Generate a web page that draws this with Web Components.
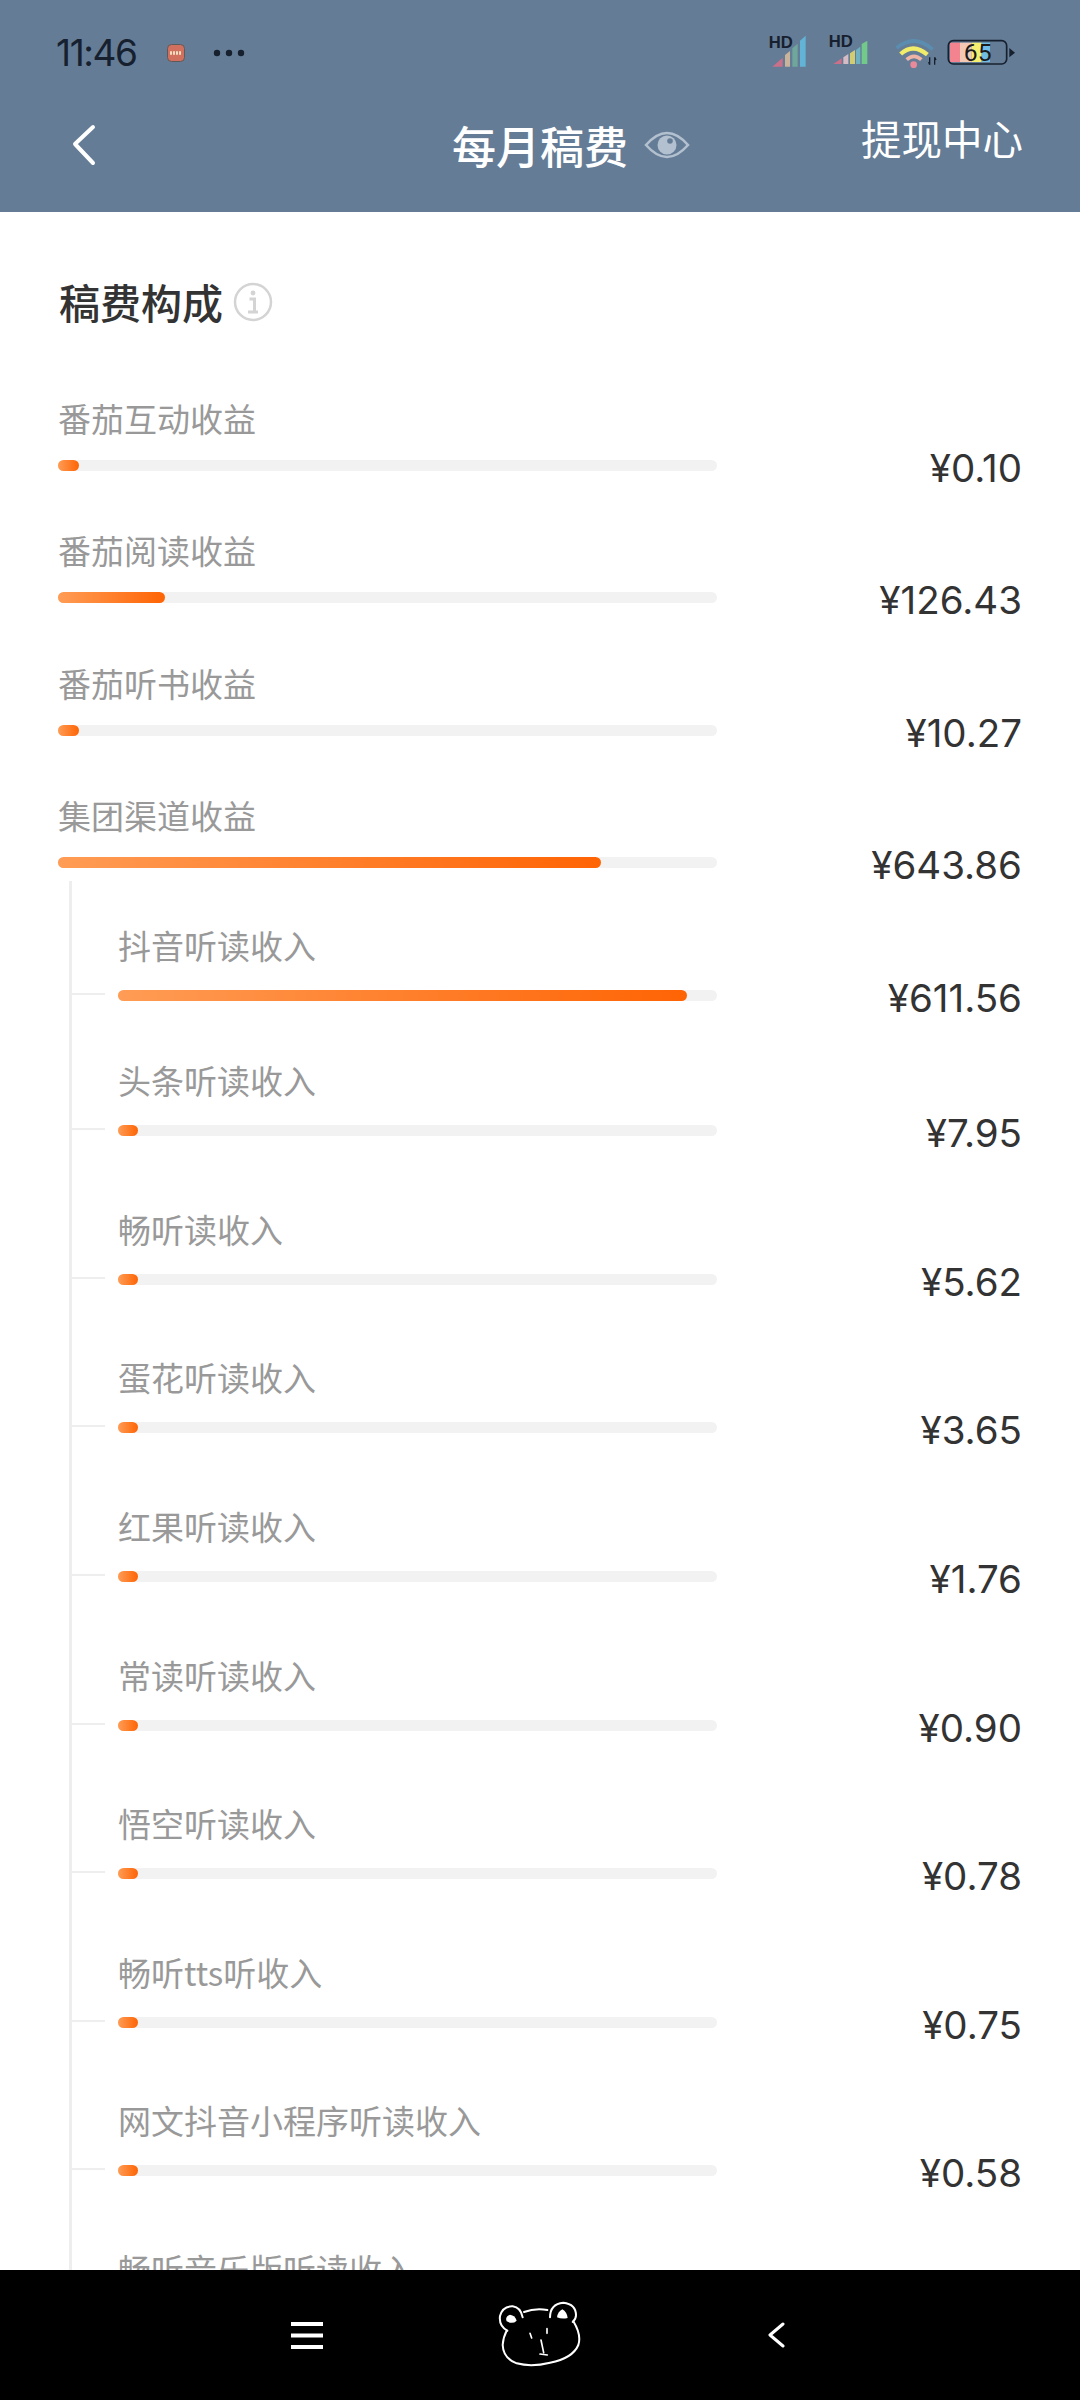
<!DOCTYPE html>
<html lang="zh">
<head>
<meta charset="utf-8">
<title>每月稿费</title>
<style>
  html, body { margin: 0; padding: 0; background: #fff; }
  body { width: 1080px; height: 2400px; overflow: hidden; font-family: Inter, "Noto Sans CJK SC", sans-serif; }
  app-screen { height: 2400px; }
</style>
</head>
<body>
<app-screen>
  <status-bar></status-bar>
  <title-bar heading="每月稿费" action="提现中心"></title-bar>
  <fee-panel slot="main" heading="稿费构成">
    <fee-row label="番茄互动收益" amount="¥0.10" fill="21"></fee-row>
    <fee-row label="番茄阅读收益" amount="¥126.43" fill="107"></fee-row>
    <fee-row label="番茄听书收益" amount="¥10.27" fill="21"></fee-row>
    <fee-row label="集团渠道收益" amount="¥643.86" fill="543"></fee-row>
    <fee-tree>
      <fee-row sub first label="抖音听读收入" amount="¥611.56" fill="569"></fee-row>
      <fee-row sub second label="头条听读收入" amount="¥7.95" fill="20"></fee-row>
      <fee-row sub label="畅听读收入" amount="¥5.62" fill="20"></fee-row>
      <fee-row sub label="蛋花听读收入" amount="¥3.65" fill="20"></fee-row>
      <fee-row sub label="红果听读收入" amount="¥1.76" fill="20"></fee-row>
      <fee-row sub label="常读听读收入" amount="¥0.90" fill="20"></fee-row>
      <fee-row sub label="悟空听读收入" amount="¥0.78" fill="20"></fee-row>
      <fee-row sub label="畅听tts听收入" amount="¥0.75" fill="20"></fee-row>
      <fee-row sub label="网文抖音小程序听读收入" amount="¥0.58" fill="20"></fee-row>
      <fee-row sub label="畅听音乐版听读收入" amount="¥0.44" fill="20"></fee-row>
    </fee-tree>
  </fee-panel>
  <nav-bar slot="nav"></nav-bar>
</app-screen>

<script>
/**
 * Page frame: coloured header on top, clipped content, navigation at the bottom.
 */
class AppScreen extends HTMLElement {
  connectedCallback () {
    this.attachShadow({ mode: 'open' }).innerHTML = `
      <style>
        :host { display: flex; flex-direction: column; width: 1080px; background: #fff; }
        header { height: 212px; background: #647c96; flex: none; }
        main { flex: 1; min-height: 0; overflow: hidden; }
        footer { flex: none; }
      </style>
      <header><slot></slot></header>
      <main><slot name="main"></slot></main>
      <footer><slot name="nav"></slot></footer>
    `;
  }
}

class StatusBar extends HTMLElement {
  connectedCallback () {
    this.attachShadow({ mode: 'open' }).innerHTML = `
      <style>
        :host { display: flex; justify-content: space-between; height: 40px; padding: 30px 64px 0 56px; }
        .left { display: flex; align-items: center; padding-top: 6px; height: 40px; box-sizing: border-box; }
        .time { font: 400 37px/40px Inter, sans-serif; color: #16202e; letter-spacing: -1.4px; width: 111px; }
        .app { margin-right: 28px; }
        .right { display: flex; align-items: flex-start; }
        svg { display: block; flex: none; }
      </style>
      <div class="left">
        <span class="time">11:46</span>
        <svg class="app" width="18" height="18" viewBox="0 0 18 18">
          <rect x=".5" y=".5" width="17" height="17" rx="4" fill="#d2705f" stroke="#5d5a5c"/>
          <path d="M3 9h12" stroke="#f3dfc0" stroke-width="3.5" stroke-dasharray="2 1"/>
        </svg>
        <svg width="32" height="8" viewBox="0 0 32 8" fill="#16202e">
          <circle cx="4" cy="4" r="3.2"/><circle cx="16" cy="4" r="3.2"/><circle cx="28" cy="4" r="3.2"/>
        </svg>
      </div>
      <div class="right">
        <svg width="42" height="40" viewBox="78 30 126 120" style="margin-right:18px">
          <path d="M97 140l31-27v27z" fill="#c9708a"/>
          <path d="M135 105l15-12v47h-15z" fill="#c9b39b"/>
          <path d="M157 85l16-14v69h-16z" fill="#6fa79c"/>
          <path d="M180 62l17-15v93h-17z" fill="#62b3d6"/>
          <text x="86" y="85" font-family="Liberation Sans" font-weight="700" font-size="50" fill="#16202e">HD</text>
        </svg>
        <svg width="43" height="40" viewBox="258 30 129 120" style="margin-right:21px">
          <path d="M280 132l25-17v17z" fill="#c9708a"/>
          <path d="M310 112l15-10v30h-15z" fill="#d5bcc4"/>
          <path d="M330 100l15-10v42h-15z" fill="#d2cd72"/>
          <path d="M348 90l13-10v52h-13z" fill="#6eb1c2"/>
          <path d="M365 72l17-10v70h-17z" fill="#72c98a"/>
          <text x="266" y="82" font-family="Liberation Sans" font-weight="700" font-size="50" fill="#16202e">HD</text>
        </svg>
        <svg width="48" height="40" viewBox="450 30 144 120" style="margin-right:8px" fill="none">
          <path d="M470 84q52-44 108 4" stroke="#5b8db0" stroke-width="11"/>
          <path d="M482 102q38-34 80 2" stroke="#f1ec6a" stroke-width="13"/>
          <path d="M500 119q22-20 44 0" stroke="#efb4a6" stroke-width="11"/>
          <circle cx="521" cy="134" r="10" fill="#e98a9a"/>
          <path d="M569 112v22M566 126l3 8M584 112v22M584 112l4 8" stroke="#16202e" stroke-width="4"/>
        </svg>
        <svg width="70" height="40" viewBox="618 30 210 120">
          <path d="M630 68h30v58h-30z" fill="#f2838f"/>
          <path d="M660 68h35v58h-35z" fill="#f3c9b5"/>
          <path d="M695 68h30v58h-30z" fill="#f5ee70"/>
          <path d="M725 68h25v58h-25z" fill="#6fbde6"/>
          <rect x="625" y="62" width="175" height="70" rx="15" fill="none" stroke="#16202e" stroke-width="5"/>
          <path d="M808 84l17 14-17 14z" fill="#16202e"/>
          <text x="713" y="123" text-anchor="middle" font-family="Roboto" font-size="74" fill="#1a1a1a">65</text>
        </svg>
      </div>
    `;
  }
}

class TitleBar extends HTMLElement {
  connectedCallback () {
    this.attachShadow({ mode: 'open' }).innerHTML = `
      <style>
        :host { display: grid; grid-template-columns: 1fr auto 1fr; align-items: center; height: 80px; margin-top: 35px; padding: 0 57px 0 72px; color: #fff; }
        .title { font: 500 44px/60px "Noto Sans CJK SC", sans-serif; letter-spacing: 0; margin-left: -15px; }
        .end { display: flex; justify-content: space-between; align-items: center; padding-left: 16px; }
        .action { font: 400 40.5px/56px "Noto Sans CJK SC", sans-serif; position: relative; top: -7px; }
        svg { display: block; }
      </style>
      <svg width="24" height="42" viewBox="0 0 24 42" fill="none" stroke="#fff" stroke-width="4" stroke-linecap="round" stroke-linejoin="round">
        <path d="M21 3L3 20l18 19"/>
      </svg>
      <span class="title">${this.getAttribute('heading')}</span>
      <div class="end">
        <svg width="46" height="30" viewBox="0 0 46 30">
          <path d="M2 15Q23-9 44 15 23 39 2 15z" fill="none" stroke="#b3c0cf" stroke-width="2.6"/>
          <circle cx="23" cy="15" r="9.5" fill="#b3c0cf"/>
          <circle cx="26" cy="11" r="2.8" fill="#647c96"/>
        </svg>
        <span class="action">${this.getAttribute('action')}</span>
      </div>
    `;
  }
}

class FeePanel extends HTMLElement {
  connectedCallback () {
    this.attachShadow({ mode: 'open' }).innerHTML = `
      <style>
        :host { display: block; padding: 61px 59px 0 58px; }
        .head { display: flex; align-items: center; gap: 10px; height: 56px; margin-bottom: 69px; }
        h2 { margin: 0 0 0 1px; font: 500 41px/56px "Noto Sans CJK SC", sans-serif; color: #333; }
        svg { display: block; margin-top: 2px; }
        .rows { display: flex; flex-direction: column; gap: 59.3px; }
      </style>
      <div class="head">
        <h2>${this.getAttribute('heading')}</h2>
        <svg width="40" height="40" viewBox="0 0 40 40">
          <circle cx="20" cy="20" r="18" fill="none" stroke="#d4d4d4" stroke-width="2.5"/>
          <circle cx="20" cy="11" r="2.4" fill="#d4d4d4"/>
          <path d="M16.5 17h5v13M15 30h10" fill="none" stroke="#d4d4d4" stroke-width="3"/>
        </svg>
      </div>
      <div class="rows"><slot></slot></div>
    `;
  }
}

/**
 * Indented list of sub rows with the vertical guide on its left.
 */
class FeeTree extends HTMLElement {
  connectedCallback () {
    this.attachShadow({ mode: 'open' }).innerHTML = `
      <style>
        :host { display: flex; flex-direction: column; gap: 72.6px; margin: -46px 0 0 11px; padding: 43.5px 0 0 46px; border-left: 3px solid #eeeeee; }
      </style>
      <slot></slot>
    `;
  }
}

/**
 * One label, progress bar and amount.
 * @attr label, amount - texts
 * @attr fill - width of the orange part in px
 * @attr sub - row inside a fee-tree (draws its tick)
 */
class FeeRow extends HTMLElement {
  connectedCallback () {
    const sub = this.hasAttribute('sub');
    const track = sub ? 599 : 659;
    this.attachShadow({ mode: 'open' }).innerHTML = `
      <style>
        :host { display: grid; grid-template-columns: ${track}px 1fr; position: relative; }
        :host([second]) { margin-top: -13px; }
        .label { font: 400 33px/44px "Noto Sans CJK SC", sans-serif; color: #999; margin: -2px 0 ${sub ? 23 : 20}px 0; white-space: nowrap; }
        .track { height: 11px; border-radius: 6px; background: #f2f2f2; }
        .fill { height: 100%; border-radius: 6px; background: linear-gradient(90deg, #ff9c55, #ff6404); }
        .amount { align-self: end; justify-self: end; font: 400 38.5px/44px Inter, sans-serif; color: #333; margin: 0 -1px -19px 0; }
        .tick { position: absolute; left: -46px; bottom: 6px; width: 33px; height: 2px; background: #eee; }
      </style>
      <div>
        <div class="label">${this.getAttribute('label')}</div>
        <div class="track"><div class="fill" style="width:${this.getAttribute('fill')}px"></div></div>
      </div>
      <div class="amount">${this.getAttribute('amount')}</div>
      ${sub ? '<i class="tick"></i>' : ''}
    `;
  }
}

class NavBar extends HTMLElement {
  connectedCallback () {
    this.attachShadow({ mode: 'open' }).innerHTML = `
      <style>
        :host { display: flex; align-items: center; height: 130px; padding-left: 291px; background: #000; }
        svg { display: block; flex: none; }
      </style>
      <svg width="32" height="27" viewBox="0 0 32 27" fill="#fff" style="margin-right:167px">
        <rect y="0" width="32" height="4"/><rect y="11.5" width="32" height="4"/><rect y="23" width="32" height="4"/>
      </svg>
      <svg width="100" height="80" viewBox="270 195 300 240" fill="none" stroke="#fff" stroke-width="6" stroke-linecap="round" stroke-linejoin="round" style="margin-right:178px">
        <path d="M322 302Q296 288 300 258 308 228 338 229 362 232 368 262"/>
        <path d="M372 246Q405 234 442 240"/>
        <path d="M450 262Q450 222 490 218 528 222 528 256 528 268 518 276"/>
        <path d="M520 274Q545 315 535 345 518 385 450 398 395 412 350 400 310 385 308 345 310 320 320 302"/>
        <path d="M330 254q-16 6-10 20 18 10 30-2-4-16-20-18z" fill="#fff" stroke="none"/>
        <path d="M487 238q-14 8-16 24 14 6 32 2-2-18-16-26z" fill="#fff" stroke="none"/>
        <path d="M390 310l5 14M441 296v14M423 330l8 38M420 372l22 3" stroke-width="5"/>
      </svg>
      <svg width="17" height="26" viewBox="0 0 17 26" fill="none" stroke="#fff" stroke-width="3" stroke-linecap="round" stroke-linejoin="round">
        <path d="M15 2L2 13l13 11"/>
      </svg>
    `;
  }
}

customElements.define('app-screen', AppScreen);
customElements.define('status-bar', StatusBar);
customElements.define('title-bar', TitleBar);
customElements.define('fee-panel', FeePanel);
customElements.define('fee-tree', FeeTree);
customElements.define('fee-row', FeeRow);
customElements.define('nav-bar', NavBar);
</script>
</body>
</html>
